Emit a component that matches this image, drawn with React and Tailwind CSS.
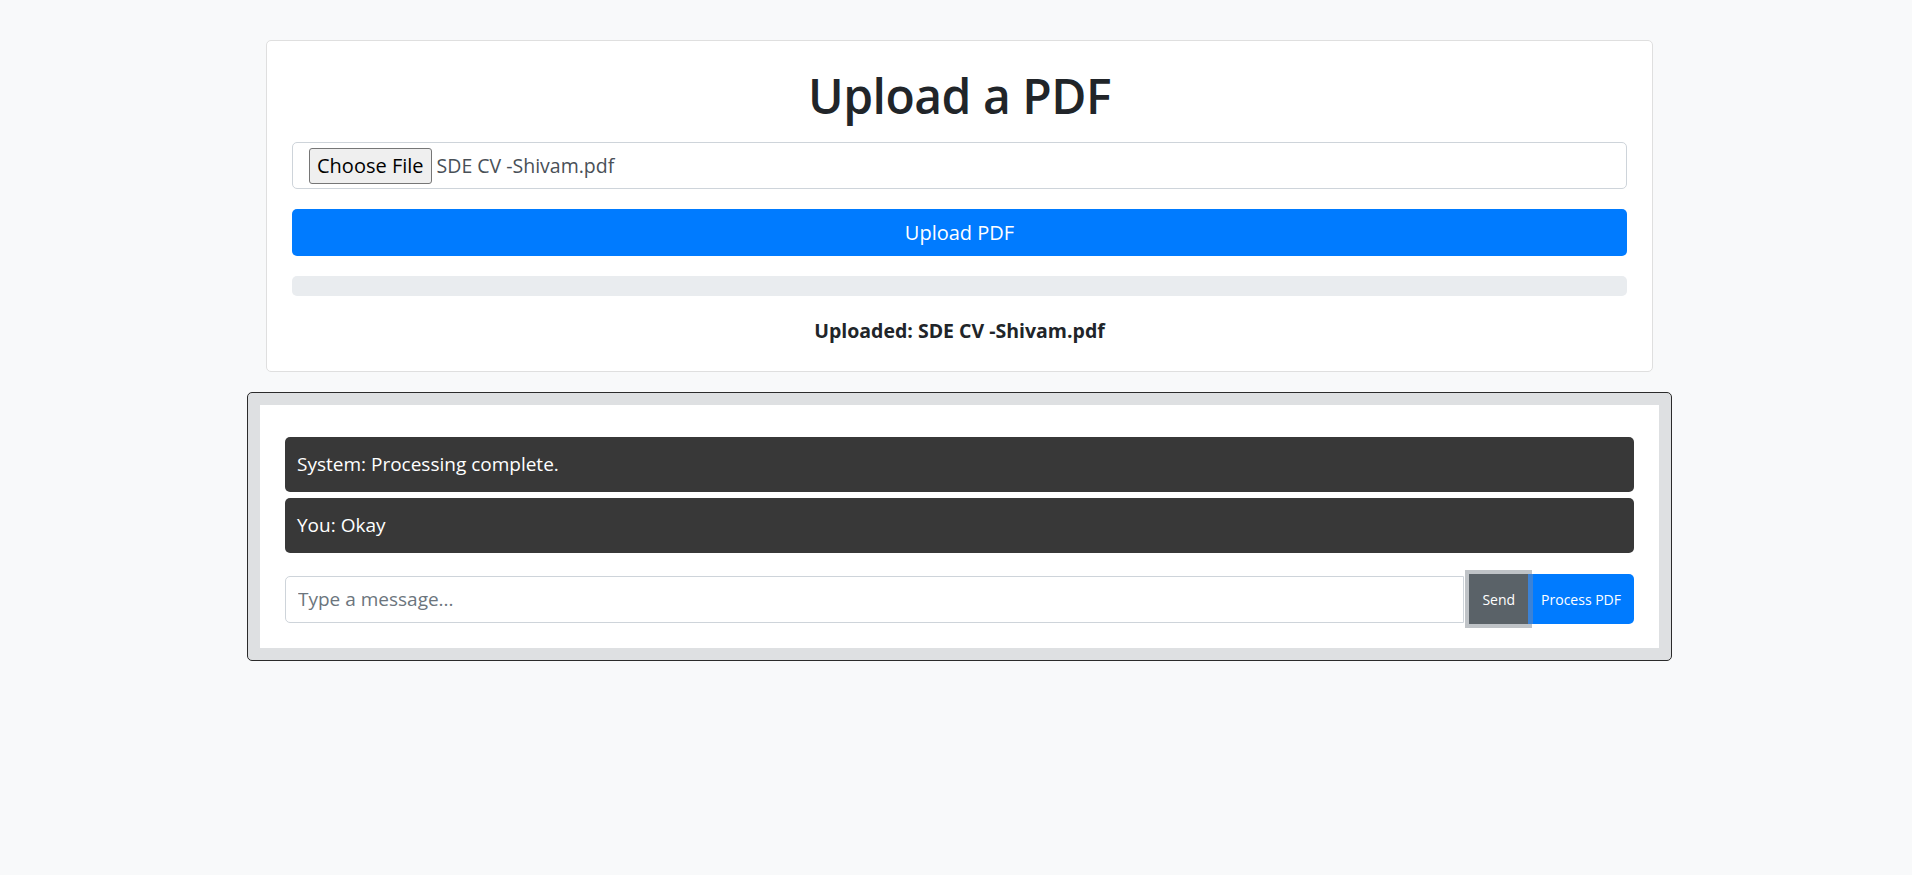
import React from 'react';

const messages = [
  { id: 1, text: 'System: Processing complete.' },
  { id: 2, text: 'You: Okay' },
];

export default function App() {
  return (
    <div className="min-h-screen bg-[#f8f9fa] pt-[40px] pl-[7px] font-['Open_Sans',sans-serif] text-[#212529]">
      {/* upload card */}
      <div className="mx-auto w-[1387px] rounded-[5px] border border-[#dfdfdf] bg-white p-[25px]">
        <h1 className="mb-[16px] text-center text-[48px] leading-[60px] font-[550] tracking-[-0.5px]">Upload a PDF</h1>

        <div className="mb-[20px] flex h-[47px] items-center rounded-[5px] border border-[#ced4da] pl-[16px]">
          <span className="flex h-[36px] items-center rounded-[3px] border border-[#767676] bg-[#efefef] px-[7px] text-[20px] text-black">
            Choose File
          </span>
          <span className="ml-[5px] text-[19.5px] text-[#495057]">SDE CV -Shivam.pdf</span>
        </div>

        <button className="mb-[20px] flex h-[47px] w-full items-center justify-center rounded-[5px] bg-[#007bff] text-[20px] text-white">
          Upload PDF
        </button>

        <div className="h-[20px] w-full rounded-[5px] bg-[#e9ecef]" />

        <p className="mt-[20px] text-center text-[19.5px] leading-[30px] font-bold">Uploaded: SDE CV -Shivam.pdf</p>
      </div>

      {/* chat box */}
      <div className="mx-auto mt-[20px] w-[1425px] rounded-[5px] border border-[#2b2b2b] bg-[#dee0e2] p-[12px]">
        <div className="bg-white px-[25px] pt-[32px] pb-[24px]">
          <div className="flex flex-col gap-[6px]">
            {messages.map((m) => (
              <div key={m.id} className="flex h-[55px] items-center rounded-[5px] bg-[#383838] px-[12px] text-[19px] text-white">
                {m.text}
              </div>
            ))}
          </div>

          <div className="mt-[21px] flex h-[50px] items-center">
            <input
              type="text"
              placeholder="Type a message..."
              className="h-[47px] flex-1 rounded-l-[5px] border border-[#ced4da] px-[12px] text-[19px] outline-none placeholder:text-[#6c757d]"
            />
            <button className="ml-[5px] h-[50px] bg-[#5a6268] px-[13px] text-[14px] text-white ring-[4px] ring-[#bfc3c7]">
              Send
            </button>
            <button className="h-[50px] rounded-r-[5px] border-l-[5px] border-[#3b82d6] bg-[#007bff] pr-[13px] pl-[8px] text-[14px] text-white">
              Process PDF
            </button>
          </div>
        </div>
      </div>
    </div>
  );
}
